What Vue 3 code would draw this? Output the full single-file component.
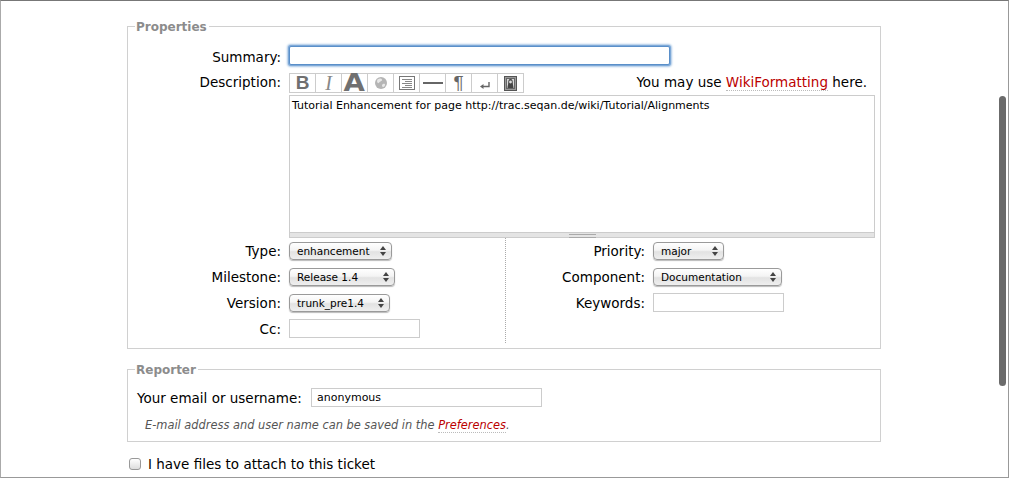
<script setup>
const leftRows = [
  { label: 'Type:', value: 'enhancement', width: 103 },
  { label: 'Milestone:', value: 'Release 1.4', width: 106 },
  { label: 'Version:', value: 'trunk_pre1.4', width: 101 },
  { label: 'Cc:', width: 131 },
]
const rightRows = [
  { label: 'Priority:', value: 'major', width: 71 },
  { label: 'Component:', value: 'Documentation', width: 129 },
  { label: 'Keywords:', width: 131 },
]
const description = 'Tutorial Enhancement for page http://trac.seqan.de/wiki/Tutorial/Alignments'
</script>

<template>
  <div class="window">
    <div class="page">
      <fieldset class="box properties">
        <legend>Properties</legend>
        <div class="field summary">
          <label>Summary:</label>
          <input class="focused" type="text" />
        </div>
        <div class="field desc">
          <label>Description:</label>
          <div class="editor">
            <div class="editor-top">
              <div class="toolbar">
                <span class="tool glyph bold">B</span>
                <span class="tool glyph ital">I</span>
                <span class="tool glyph big"><b>A</b></span>
                <span class="tool">
                  <svg width="12" height="12" viewBox="0 0 12 12">
                    <circle cx="6" cy="6" r="6" fill="#b5b5b5" />
                    <path d="M2.500 2.500c2-1.500 4-1.500 4.500 0 .8 1-1 1.800-2 2.300s-1 1.700-2 1.300S1.700 3.500 2.500 2.500zM8 7c1.300-.5 2.500 0 2 1.300S8.500 10.500 7.500 9.700 7 7.500 8 7z" fill="#e8e8e8" />
                  </svg>
                </span>
                <span class="tool">
                  <svg width="16" height="14" viewBox="0 0 16 14">
                    <rect x=".5" y=".5" width="15" height="13" fill="#fff" stroke="#777" />
                    <path d="M3 3.500h10M6 5.500h7M3 7.500h10M6 9.500h7M3 11.500h10" stroke="#888" fill="none" />
                  </svg>
                </span>
                <span class="tool">
                  <svg width="20" height="2" viewBox="0 0 20 2"><rect width="20" height="2" fill="#666" /></svg>
                </span>
                <span class="tool glyph para">¶</span>
                <span class="tool">
                  <svg class="enter" width="10" height="7" viewBox="0 0 10 7">
                    <path d="M9 0v4.500H3" fill="none" stroke="#666" stroke-width="1.400" />
                    <path d="M3.500 2v5L0 4.500z" fill="#666" />
                  </svg>
                </span>
                <span class="tool">
                  <svg width="13" height="15" viewBox="0 0 13 15">
                    <rect x=".5" y=".5" width="12" height="14" fill="#9a9a9a" stroke="#555" />
                    <rect x="2.500" y="2.500" width="8" height="10" fill="#d8d8d8" stroke="#666" />
                    <path d="M6.500 3c-2 0-2.300 2-2.300 4s-.7 3-.7 5h6c0-2-.7-3-.7-5S8.500 3 6.500 3z" fill="#444" />
                    <circle cx="6.500" cy="6" r="1.400" fill="#ddd" />
                  </svg>
                </span>
              </div>
              <p class="hint-top">You may use <a>WikiFormatting</a> here.</p>
            </div>
            <div class="text-area">{{ description }}</div>
            <div class="grip"><i></i></div>
          </div>
        </div>
        <div class="columns">
          <div class="col left">
            <div v-for="row in leftRows" :key="row.label" class="field small">
              <label>{{ row.label }}</label>
              <div v-if="row.value" class="select" :style="{ width: row.width + 'px' }">
                <span>{{ row.value }}</span>
                <svg width="6" height="10" viewBox="0 0 6 10"><path d="M3 0l3 4H0zM3 10l3-4H0z" fill="#444" /></svg>
              </div>
              <input v-else type="text" :style="{ width: row.width + 'px' }" />
            </div>
          </div>
          <div class="col right">
            <div v-for="row in rightRows" :key="row.label" class="field small">
              <label>{{ row.label }}</label>
              <div v-if="row.value" class="select" :style="{ width: row.width + 'px' }">
                <span>{{ row.value }}</span>
                <svg width="6" height="10" viewBox="0 0 6 10"><path d="M3 0l3 4H0zM3 10l3-4H0z" fill="#444" /></svg>
              </div>
              <input v-else type="text" :style="{ width: row.width + 'px' }" />
            </div>
          </div>
        </div>
      </fieldset>

      <fieldset class="box reporter">
        <legend>Reporter</legend>
        <div class="email">
          <label>Your email or username:</label>
          <input type="text" value="anonymous" />
        </div>
        <p class="hint">E-mail address and user name can be saved in the <a>Preferences</a>.</p>
      </fieldset>

      <label class="attach"><span class="check"></span>I have files to attach to this ticket</label>
    </div>
    <div class="thumb"></div>
  </div>
</template>

<style>
html, body {
  margin: 0;
  background: #fff;
  overflow: hidden;
}
</style>

<style scoped>
.window {
  position: relative;
  box-sizing: border-box;
  width: 1009px;
  height: 478px;
  overflow: hidden;
  border-top: 1px solid #777;
  border-left: 1px solid #aaa;
  border-right: 1px solid #999;
  border-bottom: 1px solid #999;
  font-family: "DejaVu Sans", Verdana, sans-serif;
  font-size: 13.5px;
  color: #000;
}
.page {
  width: 754px;
  margin-left: 126px;
  padding-top: 14px;
}
.box {
  margin: 0;
  padding: 0;
  border: 1px solid #d0d0d0;
  min-width: 0;
}
legend {
  margin-left: 7px;
  padding: 2px 2px 0 1px;
  font-size: 12px;
  font-weight: bold;
  color: #8c8c8c;
  line-height: 20px;
}
label {
  white-space: nowrap;
}
input {
  box-sizing: border-box;
  display: block;
  margin: 0;
  border: 1px solid #ccc;
  background: #fff;
  outline: none;
  font: 11px "DejaVu Sans", Verdana, sans-serif;
}
a {
  color: #b00;
  border-bottom: 1px dotted #bbb;
}
.field {
  display: flex;
}
.field > label {
  width: 161px;
  padding-right: 8px;
  box-sizing: border-box;
  text-align: right;
}
.summary {
  margin-top: 9px;
  align-items: center;
}
.summary > label {
  padding-top: 2px;
}
.focused {
  width: 381px;
  height: 19px;
  border: 1px solid #5a8fc9;
  border-radius: 2px;
  box-shadow: 0 0 0 1px #7ea9d8, 0 0 2px 2px #a8c6e6;
}
.desc {
  margin-top: 8px;
}
.desc > label {
  padding-top: 1px;
}
.editor {
  width: 586px;
}
.editor-top {
  display: flex;
  justify-content: space-between;
  height: 22px;
}
.toolbar {
  display: flex;
  box-sizing: border-box;
  height: 20px;
  border: 1px solid #ccc;
}
.tool {
  display: flex;
  align-items: center;
  justify-content: center;
  width: 25px;
  height: 18px;
  border-right: 1px solid #ccc;
}
.tool:last-child {
  border-right: 0;
}
.glyph {
  color: #707070;
  line-height: 18px;
  font-family: "Liberation Sans", sans-serif;
}
.bold {
  font-size: 19px;
  font-weight: bold;
}
.ital {
  font-family: "Liberation Serif", serif;
  font-size: 20px;
  font-style: italic;
  color: #888;
}
.big {
  font-family: "DejaVu Sans", sans-serif;
  font-size: 24px;
}
.big b {
  display: block;
  transform: scaleX(1.15);
}
.para {
  font-size: 19px;
  color: #666;
}
.enter {
  margin-top: 4px;
}
.hint-top {
  margin: 0 8px 0 0;
  line-height: 18px;
}
.text-area {
  box-sizing: border-box;
  height: 137px;
  border: 1px solid #ccc;
  border-bottom: 0;
  padding: 3px 2px;
  font-size: 11px;
  line-height: 14px;
}
.grip {
  display: flex;
  justify-content: center;
  box-sizing: border-box;
  height: 6px;
  background: #e4e4e4;
  border: 1px solid #ccc;
}
.grip i {
  display: block;
  width: 27px;
  height: 2px;
  margin-top: 1px;
  border-top: 1px solid #aaa;
  border-bottom: 1px solid #aaa;
}
.columns {
  display: flex;
  margin-bottom: 5px;
}
.col {
  box-sizing: border-box;
  height: 105px;
  padding-top: 4px;
}
.left {
  width: 378px;
  border-right: 1px dotted #aaa;
}
.right > .field > label {
  width: 147px;
}
.small {
  height: 26px;
  align-items: flex-start;
}
.small > label {
  line-height: 18px;
}
.small > input {
  height: 19px;
  margin-top: -1px;
}
.select {
  box-sizing: border-box;
  display: flex;
  align-items: center;
  justify-content: space-between;
  height: 18px;
  padding: 0 5px 0 7px;
  border: 1px solid #9a9a9a;
  border-radius: 4px;
  background: linear-gradient(#fff, #f4f4f4 45%, #e2e2e2 55%, #efefef);
  box-shadow: 0 1px 1px #bbb;
  font-size: 10.5px;
}
.reporter {
  margin-top: 9px;
  height: 82px;
}
.email {
  display: flex;
  align-items: center;
  margin: 8px 0 0 9px;
}
.email > label {
  width: 174px;
}
.email > input {
  width: 231px;
  height: 19px;
  padding: 0 5px;
}
.hint {
  margin: 11px 0 0 17px;
  font-size: 11.4px;
  line-height: 14px;
  font-style: italic;
  color: #555;
}
.attach {
  display: flex;
  align-items: center;
  margin: 14px 0 0 2px;
  line-height: 16px;
}
.check {
  box-sizing: border-box;
  width: 12px;
  height: 12px;
  margin-right: 7px;
  border: 1px solid #999;
  border-radius: 3px;
  background: linear-gradient(#fff, #ddd);
}
.thumb {
  position: absolute;
  right: 2px;
  top: 95px;
  width: 7px;
  height: 290px;
  border-radius: 4px;
  background: #6b6b6b;
}
</style>
